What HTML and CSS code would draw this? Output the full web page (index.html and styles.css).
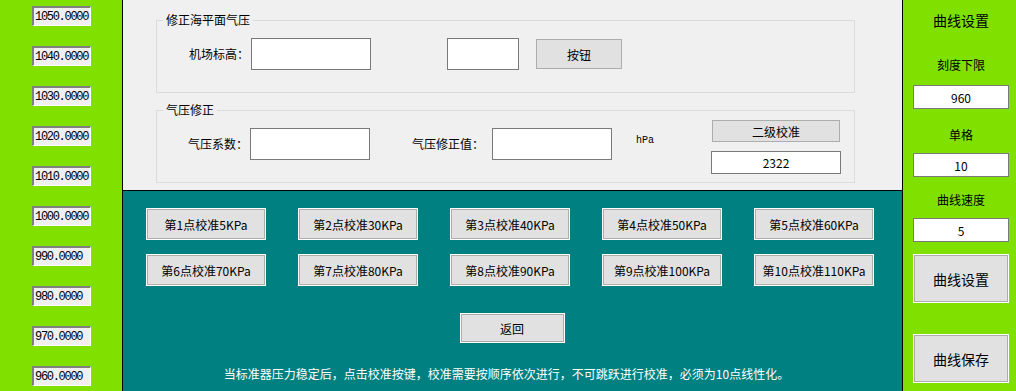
FILE: index.html
```html
<!DOCTYPE html>
<html lang="zh-CN">
<head>
  <meta charset="UTF-8" />
  <title>校准</title>
  <link rel="stylesheet" href="styles.css">
</head>
<body>
  <div class="screen">
    <div class="scale">
      <div class="tick">1050.0000</div>
      <div class="tick">1040.0000</div>
      <div class="tick">1030.0000</div>
      <div class="tick">1020.0000</div>
      <div class="tick">1010.0000</div>
      <div class="tick">1000.0000</div>
      <div class="tick">990.0000</div>
      <div class="tick">980.0000</div>
      <div class="tick">970.0000</div>
      <div class="tick">960.0000</div>
    </div>

    <div class="main">
      <div class="top">
        <div class="group">
          <span class="group-title">修正海平面气压</span>
          <div class="row">
            <label class="lbl">机场标高：</label>
            <input class="field" type="text">
            <input class="field small" type="text">
            <button class="btn">按钮</button>
          </div>
        </div>

        <div class="group second">
          <span class="group-title">气压修正</span>
          <div class="row">
            <label class="lbl">气压系数：</label>
            <input class="field" type="text">
            <label class="lbl wide">气压修正值：</label>
            <input class="field" type="text">
            <span class="unit">hPa</span>
            <div class="level">
              <button class="btn level-btn">二级校准</button>
              <input class="field level-val" type="text" value="2322">
            </div>
          </div>
        </div>
      </div>

      <div class="bottom">
        <div class="points">
          <button class="pt">第1点校准5KPa</button>
          <button class="pt">第2点校准30KPa</button>
          <button class="pt">第3点校准40KPa</button>
          <button class="pt">第4点校准50KPa</button>
          <button class="pt">第5点校准60KPa</button>
          <button class="pt">第6点校准70KPa</button>
          <button class="pt">第7点校准80KPa</button>
          <button class="pt">第8点校准90KPa</button>
          <button class="pt">第9点校准100KPa</button>
          <button class="pt">第10点校准110KPa</button>
        </div>
        <button class="pt back">返回</button>
        <p class="hint">当标准器压力稳定后，点击校准按键，校准需要按顺序依次进行，不可跳跃进行校准，必须为10点线性化。</p>
      </div>
    </div>

    <div class="side">
      <div class="side-title">曲线设置</div>
      <div class="side-lbl lower">刻度下限</div>
      <input class="side-val first" type="text" value="960">
      <div class="side-lbl unit-lbl">单格</div>
      <input class="side-val" type="text" value="10">
      <div class="side-lbl speed">曲线速度</div>
      <input class="side-val" type="text" value="5">
      <button class="pt side-btn">曲线设置</button>
      <button class="pt side-btn save">曲线保存</button>
    </div>
  </div>
</body>
</html>
```

FILE: styles.css
```css
* {
  box-sizing: border-box;
}

body {
  margin: 0;
  font-family: "Noto Sans CJK SC", "Liberation Sans", sans-serif;
  font-size: 12px;
  color: #000;
  overflow: hidden;
}

.screen {
  display: flex;
  width: 1016px;
  height: 391px;
}

/* left scale */
.scale {
  width: 122px;
  background: #80e000;
  display: flex;
  flex-direction: column;
  gap: 20px;
  padding: 6px 0 0 32px;
}

.tick {
  width: 59px;
  height: 20px;
  background: #f0f0f0;
  border-top: 2px solid #808080;
  border-left: 2px solid #808080;
  border-right: 1px solid #fff;
  border-bottom: 1px solid #fff;
  font-family: "Liberation Mono", monospace;
  font-size: 12px;
  letter-spacing: -1.3px;
  line-height: 18px;
  padding-left: 1px;
  white-space: nowrap;
  overflow: hidden;
}

/* middle */
.main {
  width: 781px;
  border-left: 1px solid #000;
  border-right: 1px solid #000;
  display: flex;
  flex-direction: column;
}

.top {
  height: 191px;
  background: #f0f0f0;
  border-bottom: 1px solid #000;
  padding: 20px 0 0 33px;
}

.group {
  position: relative;
  width: 699px;
  height: 73px;
  border: 1px solid #dcdcdc;
  padding: 17px 0 0 32px;
}

.group.second {
  margin-top: 17px;
  padding-top: 0;
}

.group-title {
  position: absolute;
  top: -9px;
  left: 6px;
  padding: 0 3px;
  background: #f0f0f0;
  line-height: 16px;
}

.row {
  display: flex;
  align-items: center;
}

.second .row {
  align-items: flex-start;
}

.lbl {
  width: 62px;
  line-height: 16px;
}

.second .lbl {
  margin-top: 25px;
  margin-left: -1px;
}

.second .lbl.wide {
  width: 80px;
  margin-left: 42px;
}

.field {
  width: 120px;
  height: 32px;
  border: 1px solid #7a7a7a;
  background: #fff;
  font: inherit;
}

.second .field {
  margin-top: 17px;
}

.field.small {
  width: 72px;
  margin-left: 76px;
}

.btn {
  width: 86px;
  height: 30px;
  margin-left: 17px;
  background: #e1e1e1;
  border: 1px solid #adadad;
  font: inherit;
  padding: 0;
}

.unit {
  width: 75px;
  margin-left: 24px;
  margin-top: 23px;
  font-family: "Liberation Mono", monospace;
  font-size: 10px;
  line-height: 14px;
}

.level {
  display: flex;
  flex-direction: column;
  margin-top: 9px;
}

.second .level-btn {
  width: 128px;
  height: 22px;
  margin-left: 1px;
}

.second .level-val {
  width: 130px;
  height: 23px;
  margin-top: 9px;
  text-align: center;
}

/* teal calibration area */
.bottom {
  flex: 1;
  background: #008080;
  display: flex;
  flex-direction: column;
  align-items: center;
  padding-top: 17px;
}

.points {
  align-self: flex-start;
  display: grid;
  grid-template-columns: repeat(5, 120px);
  gap: 14px 32px;
  margin-left: 23px;
}

.pt {
  height: 32px;
  background: #e1e1e1;
  border: 1px solid #fff;
  box-shadow: inset 0 0 0 1px #adadad;
  font: inherit;
  padding: 0;
}

.back {
  width: 105px;
  height: 30px;
  margin-top: 27px;
  margin-left: -1px;
}

.hint {
  margin: 23px 0 0 -12px;
  color: #fff;
  line-height: 16px;
}

/* right settings */
.side {
  width: 113px;
  background: #80e000;
  display: flex;
  flex-direction: column;
  align-items: center;
  padding-left: 3px;
}

.side-title {
  margin-top: 11px;
  font-size: 14px;
  line-height: 18px;
}

.side-lbl {
  line-height: 16px;
}

.side-lbl.lower {
  margin-top: 28px;
}

.side-lbl.unit-lbl {
  margin-top: 18px;
}

.side-lbl.speed {
  margin-top: 15px;
}

.side-val {
  width: 96px;
  height: 24px;
  margin-top: 10px;
  border: 1px solid #7a7a7a;
  background: #fff;
  text-align: center;
  font: inherit;
}

.side-val.first {
  margin-top: 12px;
}

.side-btn {
  width: 96px;
  height: 49px;
  margin-top: 12px;
  font-size: 14px;
}

.side-btn.save {
  margin-top: 31px;
}
```
